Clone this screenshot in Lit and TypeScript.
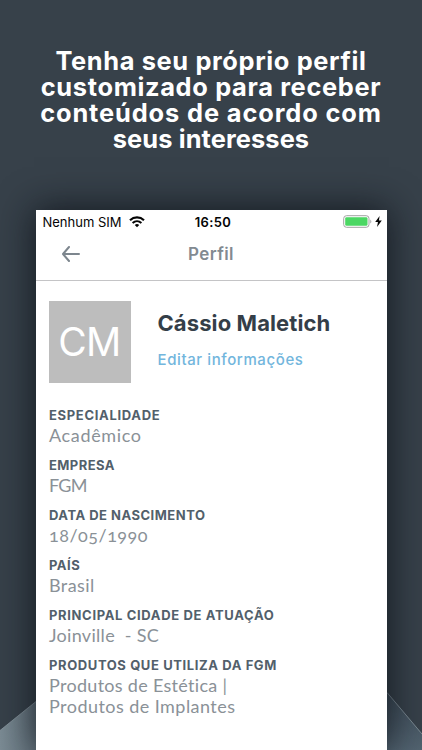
import {LitElement, html, css} from 'lit';
import {customElement, property} from 'lit/decorators.js';

@customElement('status-bar')
export class StatusBar extends LitElement {
  static styles = css`
    :host {
      display: grid;
      grid-template-columns: 1fr auto 1fr;
      align-items: center;
      height: 22px;
      padding: 1px 5px 0 7px;
      box-sizing: border-box;
      color: #050505;
      font: 13px/20px Inter, sans-serif;
    }

    .carrier {
      display: flex;
      align-items: center;
      gap: 7px;
      white-space: nowrap;
    }

    .time {
      padding-left: 2px;
      font-weight: 600;
      letter-spacing: 0.4px;
    }

    .power {
      display: flex;
      align-items: center;
      justify-content: flex-end;
      gap: 2px;
    }

    svg {
      display: block;
    }
  `;

  render() {
    return html`
      <div class="carrier">
        <span>Nenhum SIM</span>
        <svg width="16" height="12" viewBox="0 0 16 12" fill="none" stroke="#050505">
          <path d="M1 4.2C5 .5 11 .5 15 4.2" stroke-width="2.2" />
          <path d="M3.6 7C6.2 4.6 9.8 4.6 12.4 7" stroke-width="2" />
          <path d="M5.8 9C7.1 7.8 8.9 7.8 10.2 9L8 11.3z" fill="#050505" stroke="none" />
        </svg>
      </div>
      <span class="time">16:50</span>
      <div class="power">
        <svg width="30" height="13" viewBox="0 0 30 13">
          <rect x=".7" y=".7" width="25.3" height="11.6" rx="2.8" fill="#fff" stroke="#a2a2a2" />
          <rect x="2.2" y="2.2" width="22.3" height="8.6" rx="1.4" fill="#4bd763" />
          <path d="M27.3 4.4Q29.4 6.5 27.3 8.6z" fill="#a2a2a2" />
        </svg>
        <svg width="7" height="11" viewBox="0 0 6 10">
          <path d="M4 0 0 5.5h2.5L1.7 10 6 4.1H3.4z" fill="#050505" />
        </svg>
      </div>
    `;
  }
}

@customElement('profile-field')
export class ProfileField extends LitElement {
  static styles = css`
    :host {
      display: block;
      margin-bottom: 9px;
    }

    .label {
      color: #52606b;
      font: 700 13px/20px Inter, sans-serif;
      white-space: nowrap;
    }

    .value {
      color: #8a9197;
      font: 400 18px/21px Lato, sans-serif;
      font-variant-numeric: oldstyle-nums;
      white-space: pre;
    }

    .text {
      display: block;
    }
  `;

  @property() label = '';
  @property({type: Array}) lines: string[] = [];
  @property({type: Number}) labelSpacing = 0;
  @property({type: Array}) spacing: number[] = [];

  render() {
    return html`
      <div class="label" style="letter-spacing: ${this.labelSpacing}px">${this.label}</div>
      <div class="value">${this.lines.map(
        (line, i) =>
          html`<span class="text" style="letter-spacing: ${this.spacing[i]}px">${line}</span>`
      )}</div>
    `;
  }
}

const FIELDS = [
  {label: 'ESPECIALIDADE', labelSpacing: 0.68, lines: ['Acadêmico'], spacing: [0.65]},
  {label: 'EMPRESA', labelSpacing: 0.42, lines: ['FGM'], spacing: [-0.7]},
  {label: 'DATA DE NASCIMENTO', labelSpacing: 0.5, lines: ['18/05/1990'], spacing: [0.5]},
  {label: 'PAÍS', labelSpacing: 0.5, lines: ['Brasil'], spacing: [0.4]},
  {label: 'PRINCIPAL CIDADE DE ATUAÇÃO', labelSpacing: 0.65, lines: ['Joinville  - SC'], spacing: [0.3]},
  {
    label: 'PRODUTOS QUE UTILIZA DA FGM',
    labelSpacing: 0.6,
    lines: ['Produtos de Estética |', 'Produtos de Implantes'],
    spacing: [0.3, 0.45],
  },
];

@customElement('app-root')
export class AppRoot extends LitElement {
  static styles = css`
    :host {
      display: block;
      position: relative;
      width: 422px;
      height: 750px;
      overflow: hidden;
      background: #37414a;
      font-family: Inter, sans-serif;
    }

    .backdrop {
      position: absolute;
      inset: 0;
    }

    .page {
      position: relative;
      display: flex;
      flex-direction: column;
      align-items: center;
    }

    .headline {
      height: 210px;
      padding-top: 48px;
      box-sizing: border-box;
      color: #fff;
      font-size: 25.4px;
      font-weight: 700;
      line-height: 26px;
      text-align: center;
      white-space: nowrap;
    }

    .headline span {
      display: block;
    }

    .l1 {
      letter-spacing: 0.63px;
    }

    .l2 {
      letter-spacing: 0.66px;
    }

    .l3 {
      letter-spacing: 0.88px;
    }

    .l4 {
      letter-spacing: 0.1px;
    }

    .phone {
      width: 351px;
      height: 540px;
      background: #fff;
      box-shadow: 0 0 34px 2px rgba(10, 14, 20, 0.75);
    }

    .nav {
      display: grid;
      grid-template-columns: 1fr auto 1fr;
      align-items: center;
      height: 49px;
      padding: 0 26px 4px;
      box-sizing: border-box;
      border-bottom: 1px solid #c4c4c6;
    }

    .title {
      color: #828a91;
      font-size: 17px;
      font-weight: 600;
      letter-spacing: 0.4px;
    }

    .person {
      display: flex;
      gap: 27px;
      padding: 20px 13px 0;
    }

    .avatar {
      display: flex;
      justify-content: center;
      width: 82px;
      height: 82px;
      background: #bdbdbd;
      color: #fff;
      font-size: 39px;
      font-weight: 400;
      letter-spacing: -0.6px;
      line-height: 82px;
    }

    .name {
      padding-top: 8px;
      color: #343e48;
      font-size: 22px;
      font-weight: 700;
      line-height: 28px;
      letter-spacing: 0.1px;
    }

    .edit {
      padding-top: 13px;
      color: #72b6dd;
      font-size: 15px;
      font-weight: 500;
      line-height: 20px;
      letter-spacing: 0.6px;
    }

    .fields {
      padding: 22px 13.5px 0;
    }
  `;

  render() {
    return html`
      <svg class="backdrop" width="422" height="750">
        <defs>
          <linearGradient id="left" x2="1">
            <stop stop-color="#7b8b94" />
            <stop offset="1" stop-color="#65747e" />
          </linearGradient>
          <linearGradient id="right" x2="0" y2="1">
            <stop stop-color="#3d4b57" />
            <stop offset="1" stop-color="#526370" />
          </linearGradient>
        </defs>
        <path d="M0 730.5 36 701.5V750H0z" fill="url(#left)" />
        <path d="M387 692.5 422 734V750H387z" fill="url(#right)" />
        <path d="M0 730.5 36 701.5M387 692.5 422 734" stroke="#8c99a2" stroke-width=".8" />
      </svg>
      <div class="page">
        <div class="headline">
          <span class="l1">Tenha seu próprio perfil</span>
          <span class="l2">customizado para receber</span>
          <span class="l3">conteúdos de acordo com</span>
          <span class="l4">seus interesses</span>
        </div>
        <div class="phone">
          <status-bar></status-bar>
          <div class="nav">
            <svg width="18" height="16" viewBox="0 0 18 16" fill="none" stroke="#7d868e" stroke-width="2" stroke-linecap="round" stroke-linejoin="round">
              <path d="M7 1 1 8l6 7M1 8h16" />
            </svg>
            <span class="title">Perfil</span>
          </div>
          <div class="person">
            <div class="avatar">CM</div>
            <div>
              <div class="name">Cássio Maletich</div>
              <div class="edit">Editar informações</div>
            </div>
          </div>
          <div class="fields">
            ${FIELDS.map(
              (f) => html`<profile-field
                .label=${f.label}
                .labelSpacing=${f.labelSpacing}
                .lines=${f.lines}
                .spacing=${f.spacing}
              ></profile-field>`
            )}
          </div>
        </div>
      </div>
    `;
  }
}
